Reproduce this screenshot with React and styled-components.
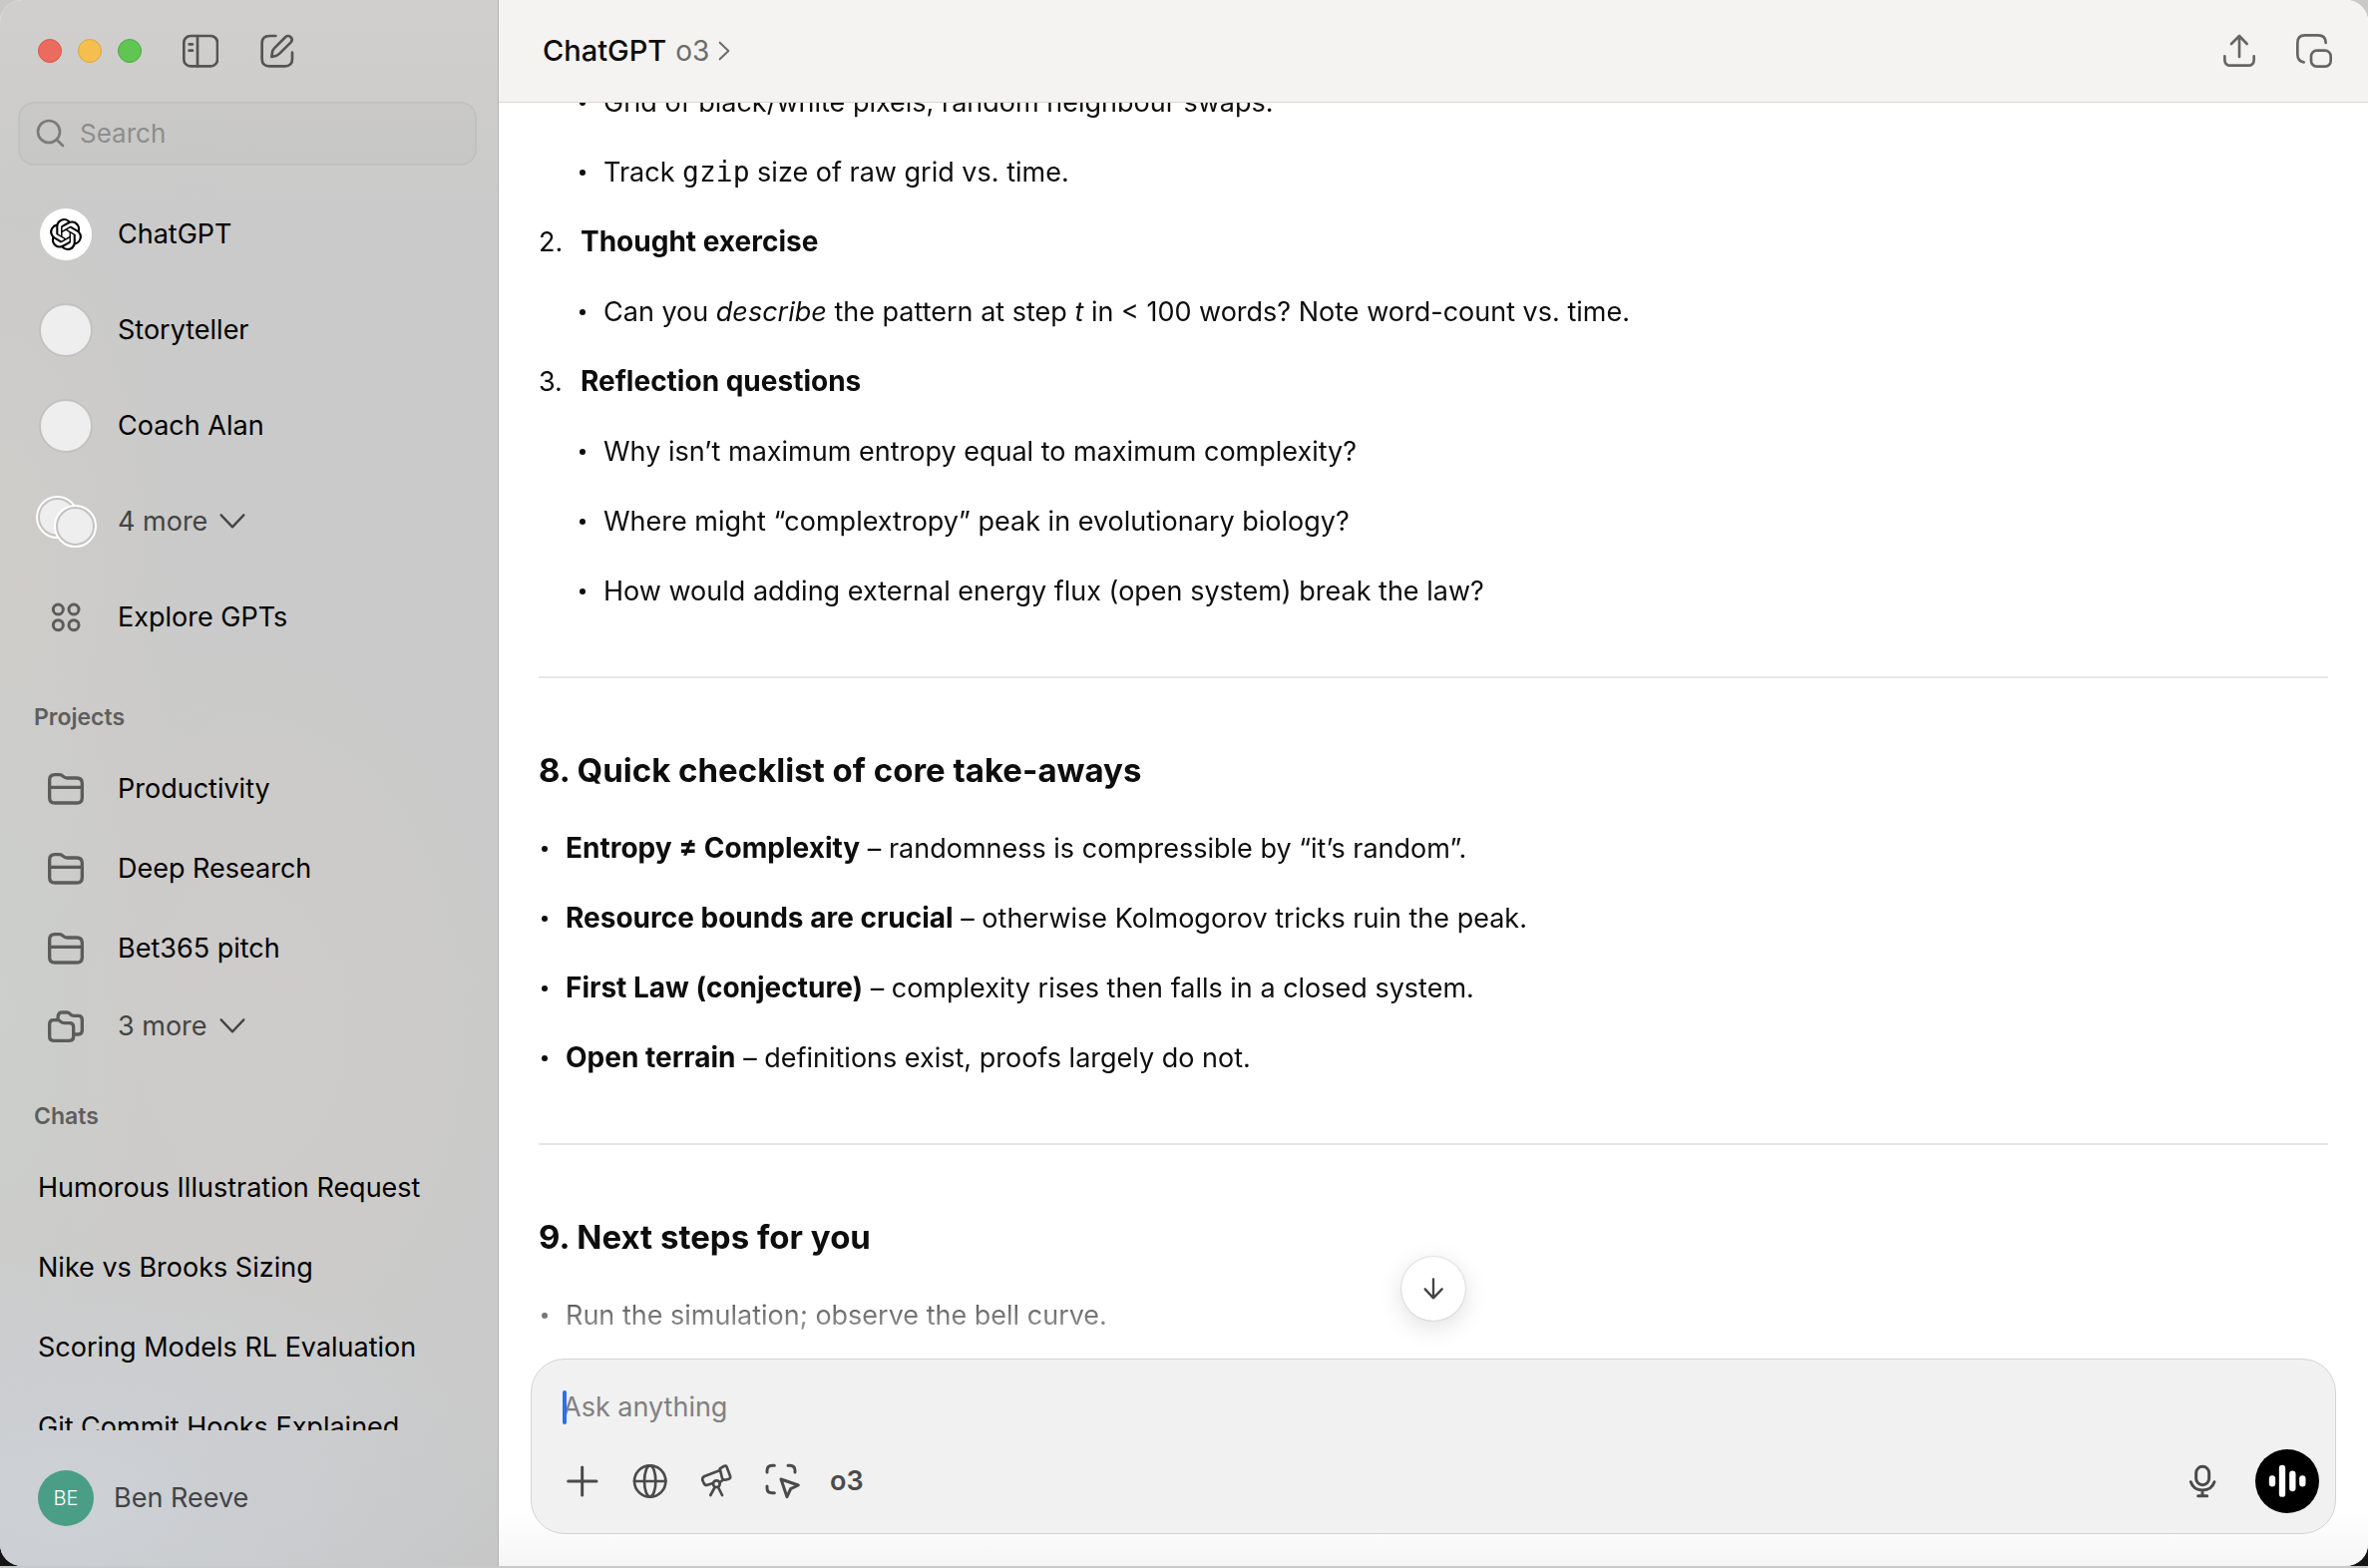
import React from 'react';
import styled, { createGlobalStyle } from 'styled-components';
import { SiOpenai } from 'react-icons/si';

const GlobalStyle = createGlobalStyle`
  *, *::before, *::after { box-sizing: border-box; }
  body {
    margin: 0;
    background: linear-gradient(#c9c9c9 0 40px, #141414 60px);
    font-family: Inter, "Liberation Sans", sans-serif;
    font-size: 27px;
    line-height: 34px;
    color: #0d0d0d;
  }
  button, input { font: inherit; color: inherit; }
  button { border: 0; padding: 0; background: none; cursor: pointer; }
  ul, ol { list-style: none; margin: 0; padding: 0; }
`;

const Window = styled.div`
  display: flex;
  height: calc(100vh - 2px);
  border-radius: 22px;
  overflow: hidden;
  background: #fff;
`;

/* Sidebar */

const Sidebar = styled.aside`
  flex: none;
  width: 500px;
  display: flex;
  flex-direction: column;
  border-right: 1px solid #b2b2b2;
  background:
    radial-gradient(480px 260px at 12% 96%, #cdd1d6, rgba(205, 209, 214, 0)),
    radial-gradient(140px 420px at 0% 64%, #cccfcb, rgba(204, 207, 203, 0)),
    radial-gradient(320px 460px at 48% 66%, #cecccA, rgba(206, 204, 202, 0)),
    radial-gradient(180px 420px at 0% 36%, #cfcdc9, rgba(207, 205, 201, 0)),
    linear-gradient(#d0cfcd, #cacaca 220px, #cacaca 1400px, #c6c6c6);
`;

const TitleBar = styled.div`
  display: flex;
  align-items: center;
  height: 102px;
  padding-left: 38px;
  gap: 41px;
`;

const Lights = styled.div`
  display: flex;
  gap: 16px;
`;

const Light = styled.button`
  width: 24px;
  height: 24px;
  border-radius: 50%;
  background: ${(p) => p.$color};
  border: 1px solid ${(p) => p.$edge};
`;

const IconButton = styled.button`
  display: flex;
  align-items: center;
  justify-content: center;
  width: ${(p) => p.$width || 36}px;
  height: 40px;
  color: ${(p) => p.$color || '#545454'};
`;

const SearchBox = styled.label`
  display: flex;
  align-items: center;
  gap: 14px;
  height: 64px;
  margin: 0 21px 21px 18px;
  padding: 0 16px;
  border: 2px solid #c1c1c1;
  border-radius: 16px;
  background: rgba(0, 0, 0, 0.016);
  color: #7b7b7b;
`;

const SearchInput = styled.input`
  flex: 1;
  min-width: 0;
  padding: 0;
  border: 0;
  outline: 0;
  background: none;
  font-size: 26px;
  &::placeholder { color: #8d8d8d; opacity: 1; }
`;

const Scroller = styled.nav`
  flex: 1;
  min-height: 0;
  overflow: hidden;
`;

const Row = styled.a`
  display: flex;
  align-items: center;
  gap: 24px;
  height: ${(p) => p.$height}px;
  padding-left: 38px;
  color: ${(p) => (p.$muted ? '#444' : '#000')};
  text-decoration: none;
  white-space: nowrap;
`;

const Slot = styled.span`
  flex: none;
  display: flex;
  align-items: center;
  justify-content: center;
  width: 56px;
  color: #5c5c5c;
`;

const Avatar = styled.span`
  display: flex;
  align-items: center;
  justify-content: center;
  width: ${(p) => (p.$logo ? 52 : 54)}px;
  height: ${(p) => (p.$logo ? 52 : 54)}px;
  border-radius: 50%;
  background: ${(p) => (p.$logo ? '#fff' : '#eee')};
  border: ${(p) => (p.$logo ? 0 : '2px solid #c2c2c2')};
  color: #000;
`;

const AvatarStack = styled.span`
  flex: none;
  display: flex;
`;

const StackedAvatar = styled.span`
  flex: none;
  width: 41px;
  height: 41px;
  border-radius: 50%;
  background: #eee;
  border: 3px solid #c2c2c2;
  outline: 2px solid #fff;
  outline-offset: -1px;
  margin: ${(p) => (p.$front ? '9px 0 0 -23px' : '0 0 9px 0')};
`;

const More = styled.span`
  display: flex;
  align-items: center;
  gap: 12px;
`;

const SectionLabel = styled.h2`
  margin: 0;
  padding: 38px 0 18px 34px;
  font-size: 23px;
  line-height: 28px;
  font-weight: 600;
  color: #5e5e5e;
`;

const Account = styled.button`
  display: flex;
  align-items: center;
  gap: 20px;
  height: 136px;
  padding-left: 38px;
  color: #434345;
`;

const Initials = styled.span`
  display: flex;
  align-items: center;
  justify-content: center;
  width: 56px;
  height: 56px;
  border-radius: 50%;
  background: #4a9e86;
  color: #fff;
  font-size: 20px;
  font-weight: 300;
`;

/* Conversation */

const Main = styled.main`
  flex: 1;
  min-width: 0;
  display: flex;
  flex-direction: column;
  background: linear-gradient(to top, #f5f5f5, #fff 54px);
`;

const Header = styled.header`
  flex: none;
  display: flex;
  align-items: center;
  justify-content: space-between;
  height: 103px;
  padding: 0 36px 0 44px;
  border-bottom: 1px solid #d6d6d6;
  background: #f4f3f1;
`;

const ModelPicker = styled.button`
  display: flex;
  align-items: center;
  gap: 9px;
  color: #6c6c6c;
`;

const AppName = styled.span`
  font-size: 29px;
  font-weight: 500;
  color: #0d0d0d;
`;

const ModelName = styled.span`
  font-size: 28px;
`;

const Actions = styled.div`
  display: flex;
  gap: 39px;
`;

const Pane = styled.section`
  position: relative;
  flex: 1;
  min-height: 0;
  display: flex;
`;

const Thread = styled.article`
  flex: 1;
  min-width: 0;
  overflow: hidden;
  padding: 0 40px;
  mask-image: linear-gradient(to bottom, #000 calc(100% - 92px), transparent calc(100% + 20px));
`;

const Steps = styled.ol`
  display: grid;
  gap: 36px;
  margin-top: -17px;
`;

const Step = styled.li`
  display: grid;
  gap: 36px;
`;

const StepTitle = styled.div`
  display: grid;
  grid-template-columns: 42px 1fr;
  align-items: baseline;
`;

const Bullets = styled.ul`
  display: grid;
  gap: 36px;
  padding-left: ${(p) => (p.$nested ? 38 : 0)}px;
`;

const Bullet = styled.li`
  display: flex;
  align-items: center;
  gap: 18px;
  &::before {
    content: "";
    flex: none;
    width: 6px;
    height: 6px;
    margin-left: 3px;
    border-radius: 50%;
    background: currentColor;
  }
`;

const Strong = styled.strong`
  font-size: 28px;
  line-height: 28px;
  font-weight: 700;
`;

const Code = styled.code`
  font-family: "DejaVu Sans Mono", "Liberation Mono", monospace;
  font-size: 28px;
  line-height: 28px;
`;

const Rule = styled.hr`
  height: 2px;
  margin: 68px 0 72px;
  border: 0;
  background: #e6e6e6;
`;

const Heading = styled.h3`
  margin: 0 0 42px;
  font-size: 33px;
  line-height: 40px;
  font-weight: 700;
`;

const JumpButton = styled.button`
  position: absolute;
  left: 50%;
  bottom: 38px;
  transform: translateX(-50%);
  display: flex;
  align-items: center;
  justify-content: center;
  width: 64px;
  height: 64px;
  border-radius: 50%;
  background: #fff;
  color: #444;
  box-shadow: 0 0 2px rgba(0, 0, 0, 0.25), 0 6px 24px rgba(0, 0, 0, 0.13);
`;

const Composer = styled.form`
  flex: none;
  display: grid;
  gap: 25px;
  margin: 0 32px 32px;
  padding: 31px 16px 20px 31px;
  border: 1px solid #d4d4d4;
  border-radius: 34px;
  background: #f1f1f1;
`;

const PromptField = styled.label`
  position: relative;
  display: flex;
`;

const Caret = styled.span`
  position: absolute;
  left: 0;
  top: 0;
  width: 4px;
  height: 34px;
  border-radius: 2px;
  background: #2f6cf0;
`;

const PromptInput = styled.input`
  flex: 1;
  height: 34px;
  padding: 0;
  border: 0;
  outline: 0;
  background: none;
  &::placeholder { color: #808080; opacity: 1; }
`;

const Toolbar = styled.div`
  display: flex;
  align-items: center;
  gap: 27px;
`;

const ModelChip = styled.button`
  margin-right: auto;
  font-weight: 600;
  color: #4a4a4a;
`;

const VoiceButton = styled.button`
  display: flex;
  align-items: center;
  justify-content: center;
  width: 64px;
  height: 64px;
  margin-left: 6px;
  border-radius: 50%;
  background: #000;
  color: #fff;
`;

/* Icons: drawn on a grid of three units to the pixel */

function Icon({ box, size = 36, height, stroke = 8, children }) {
  return (
    <svg
      width={size}
      height={height || size}
      viewBox={box}
      fill="none"
      stroke="currentColor"
      strokeWidth={stroke}
      strokeLinecap="round"
      strokeLinejoin="round"
      aria-hidden="true"
    >
      {children}
    </svg>
  );
}

const SidebarIcon = () => (
  <Icon box="552 97 108 108">
    <rect x="556" y="106" width="101" height="91" rx="20" />
    <path d="M597 106V197M572 131H582M572 150H582" />
  </Icon>
);

const ComposeIcon = () => (
  <Icon box="776 97 108 108">
    <path d="M825 106H806Q784 106 784 128V175Q784 197 806 197H853Q875 197 875 175V156" />
    <path d="M813 169L815 155Q816 148 821 143L855 109Q862 103 870 109Q878 117 871 125L837 159Q832 164 826 166Z" />
  </Icon>
);

const SearchIcon = () => (
  <Icon box="108 359 90 90" size={30}>
    <circle cx="147" cy="398" r="33" />
    <path d="M171 423L189 440" />
  </Icon>
);

const GridIcon = () => (
  <Icon box="144 782 108 108" stroke={9}>
    <circle cx="175" cy="812" r="15" />
    <circle cx="222" cy="812" r="15" />
    <circle cx="175" cy="859" r="15" />
    <circle cx="222" cy="859" r="15" />
  </Icon>
);

const FolderIcon = () => (
  <Icon box="144 276 108 108" stroke={10}>
    <path d="M149 325V303Q149 287 165 287H178Q185 287 190 292Q195 297 202 297H231Q247 297 247 313V356Q247 372 231 372H165Q149 372 149 356ZM149 325H247" />
  </Icon>
);

const FoldersIcon = () => (
  <Icon box="144 990 108 108" stroke={10}>
    <path d="M149 1037Q149 1025 161 1025H172Q178 1025 183 1030Q187 1034 194 1034H209Q221 1034 221 1046V1075Q221 1087 209 1087H161Q149 1087 149 1075Z" />
    <path d="M174 1020Q174 1002 186 1002H202Q207 1002 212 1008Q216 1012 222 1012H235Q247 1012 247 1024V1056Q247 1068 235 1068H224" />
  </Icon>
);

const ChevronDown = () => (
  <Icon box="0 0 78 60" size={26} height={20} stroke={7}>
    <path d="M5 10L39 46L73 10" />
  </Icon>
);

const ChevronRight = () => (
  <Icon box="0 0 36 60" size={12} height={20} stroke={6}>
    <path d="M5 5L31 30L5 55" />
  </Icon>
);

const ShareIcon = () => (
  <Icon box="141 96 108 108">
    <path d="M151 166V176Q151 194 169 194H221Q239 194 239 176V166M195 168V105M171 129L195 105L218 129" />
  </Icon>
);

const PipIcon = () => (
  <Icon box="367 96 108 108">
    <path d="M390 184Q371 182 371 160V126Q371 103 393 103H433Q456 103 456 126" />
    <rect x="412" y="149" width="59" height="48" rx="17" />
  </Icon>
);

const ArrowDownIcon = () => (
  <Icon box="177 162 108 108" stroke={7}>
    <path d="M231 187V244M206 217L231 244L257 217" />
  </Icon>
);

const PlusIcon = () => (
  <Icon box="140 380 108 108" stroke={9}>
    <path d="M151 434H236M193 392V476" />
  </Icon>
);

const GlobeIcon = () => (
  <Icon box="342 381 108 108">
    <circle cx="398" cy="435" r="47" />
    <ellipse cx="398" cy="435" rx="17" ry="47" />
    <path d="M351 435H445" />
  </Icon>
);

const TelescopeIcon = () => (
  <Icon box="540 381 108 108">
    <path d="M606 402L559 420Q551 424 553 432L557 441Q560 449 568 446L584 441M605 439L616 430" />
    <path d="M605 397L617 390Q624 386 626 393L636 419Q638 426 632 428L621 431Q615 432 612 426Z" />
    <circle cx="595" cy="443" r="10" />
    <path d="M590 453L577 477M600 453L612 477" />
  </Icon>
);

const CaptureIcon = () => (
  <Icon box="739 381 108 108" stroke={9}>
    <path d="M745 408V403Q745 388 760 388H767M808 388H814Q829 388 829 403V408M745 450V455Q745 470 760 470H767" />
    <path d="M787 429L839 447L816 458L805 482Z" />
  </Icon>
);

const MicIcon = () => (
  <Icon box="211 381 108 108" stroke={9}>
    <rect x="246" y="391" width="39" height="55" rx="19" />
    <path d="M230 437Q238 462 265 462Q293 462 301 437M265 462V478M252 479H279" />
  </Icon>
);

const WaveIcon = () => (
  <Icon box="460 375 120 120" size={40} stroke={19}>
    <path d="M475 427V442M505 396V473M536 413V456M566 427V442" />
  </Icon>
);

const gpts = ['Storyteller', 'Coach Alan'];
const projects = ['Productivity', 'Deep Research', 'Bet365 pitch'];
const chats = [
  'Humorous Illustration Request',
  'Nike vs Brooks Sizing',
  'Scoring Models RL Evaluation',
  'Git Commit Hooks Explained',
];
const questions = [
  'Why isn’t maximum entropy equal to maximum complexity?',
  'Where might “complextropy” peak in evolutionary biology?',
  'How would adding external energy flux (open system) break the law?',
];
const takeaways = [
  ['Entropy ≠ Complexity', 'randomness is compressible by “it’s random”.'],
  ['Resource bounds are crucial', 'otherwise Kolmogorov tricks ruin the peak.'],
  ['First Law (conjecture)', 'complexity rises then falls in a closed system.'],
  ['Open terrain', 'definitions exist, proofs largely do not.'],
];

export default function App() {
  return (
    <>
      <GlobalStyle />
      <Window>
        <Sidebar>
          <TitleBar>
            <Lights>
              <Light $color="#ec6b5f" $edge="#d8564b" aria-label="Close" />
              <Light $color="#f4bf4f" $edge="#dba63c" aria-label="Minimise" />
              <Light $color="#61c554" $edge="#4dab41" aria-label="Zoom" />
            </Lights>
            <IconButton aria-label="Toggle sidebar"><SidebarIcon /></IconButton>
            <IconButton aria-label="New chat"><ComposeIcon /></IconButton>
          </TitleBar>
          <SearchBox>
            <SearchIcon />
            <SearchInput type="text" placeholder="Search" aria-label="Search" />
          </SearchBox>
          <Scroller>
            <Row href="#" $height={96}>
              <Slot><Avatar $logo><SiOpenai size={32} /></Avatar></Slot>
              ChatGPT
            </Row>
            {gpts.map((name) => (
              <Row href="#" $height={96} key={name}>
                <Slot><Avatar /></Slot>
                {name}
              </Row>
            ))}
            <Row href="#" $height={96} $muted>
              <Slot>
                <AvatarStack>
                  <StackedAvatar />
                  <StackedAvatar $front />
                </AvatarStack>
              </Slot>
              <More>4 more <ChevronDown /></More>
            </Row>
            <Row href="#" $height={96}>
              <Slot><GridIcon /></Slot>
              Explore GPTs
            </Row>
            <SectionLabel>Projects</SectionLabel>
            {projects.map((name) => (
              <Row href="#" $height={80} key={name}>
                <Slot><FolderIcon /></Slot>
                {name}
              </Row>
            ))}
            <Row href="#" $height={76} $muted>
              <Slot><FoldersIcon /></Slot>
              <More>3 more <ChevronDown /></More>
            </Row>
            <SectionLabel>Chats</SectionLabel>
            {chats.map((name) => (
              <Row href="#" $height={80} key={name}>{name}</Row>
            ))}
          </Scroller>
          <Account>
            <Initials>BE</Initials>
            Ben Reeve
          </Account>
        </Sidebar>

        <Main>
          <Header>
            <ModelPicker>
              <AppName>ChatGPT</AppName>
              <ModelName>o3</ModelName>
              <ChevronRight />
            </ModelPicker>
            <Actions>
              <IconButton $color="#656565" aria-label="Share"><ShareIcon /></IconButton>
              <IconButton $color="#656565" aria-label="Open in companion window"><PipIcon /></IconButton>
            </Actions>
          </Header>

          <Pane>
            <Thread>
              <Steps>
                <Step>
                  <Bullets $nested>
                    <Bullet><span>Grid of black/white pixels, random neighbour swaps.</span></Bullet>
                    <Bullet><span>Track <Code>gzip</Code> size of raw grid vs. time.</span></Bullet>
                  </Bullets>
                </Step>
                <Step>
                  <StepTitle><span>2.</span><Strong>Thought exercise</Strong></StepTitle>
                  <Bullets $nested>
                    <Bullet>
                      <span>
                        Can you <em>describe</em> the pattern at step <em>t</em> in &lt; 100 words? Note word-count vs. time.
                      </span>
                    </Bullet>
                  </Bullets>
                </Step>
                <Step>
                  <StepTitle><span>3.</span><Strong>Reflection questions</Strong></StepTitle>
                  <Bullets $nested>
                    {questions.map((q) => <Bullet key={q}><span>{q}</span></Bullet>)}
                  </Bullets>
                </Step>
              </Steps>
              <Rule />
              <Heading>8. Quick checklist of core take-aways</Heading>
              <Bullets>
                {takeaways.map(([term, rest]) => (
                  <Bullet key={term}><span><Strong>{term}</Strong> – {rest}</span></Bullet>
                ))}
              </Bullets>
              <Rule />
              <Heading>9. Next steps for you</Heading>
              <Bullets>
                <Bullet><span>Run the simulation; observe the bell curve.</span></Bullet>
              </Bullets>
            </Thread>
            <JumpButton aria-label="Scroll to bottom"><ArrowDownIcon /></JumpButton>
          </Pane>

          <Composer>
            <PromptField>
              <Caret />
              <PromptInput type="text" placeholder="Ask anything" aria-label="Ask anything" />
            </PromptField>
            <Toolbar>
              <IconButton type="button" $width={40} $color="#4a4a4a" aria-label="Add"><PlusIcon /></IconButton>
              <IconButton type="button" $width={40} $color="#4a4a4a" aria-label="Search the web"><GlobeIcon /></IconButton>
              <IconButton type="button" $width={40} $color="#4a4a4a" aria-label="Deep research"><TelescopeIcon /></IconButton>
              <IconButton type="button" $width={40} $color="#4a4a4a" aria-label="Work with apps"><CaptureIcon /></IconButton>
              <ModelChip type="button">o3</ModelChip>
              <IconButton type="button" $width={40} $color="#4a4a4a" aria-label="Dictate"><MicIcon /></IconButton>
              <VoiceButton type="button" aria-label="Voice mode"><WaveIcon /></VoiceButton>
            </Toolbar>
          </Composer>
        </Main>
      </Window>
    </>
  );
}
